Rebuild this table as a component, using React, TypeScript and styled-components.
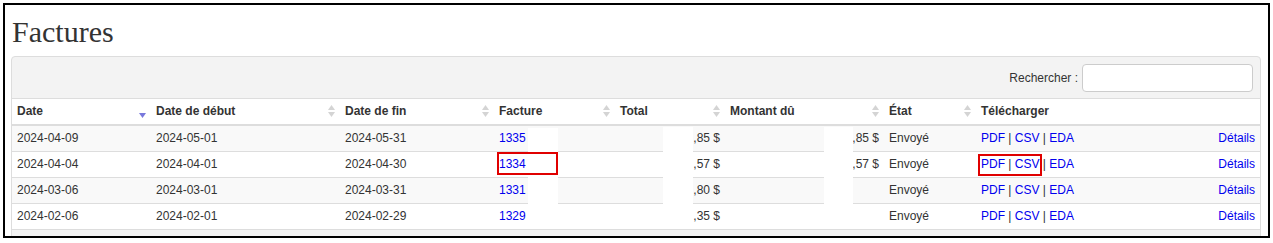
import React from 'react';
import styled, { createGlobalStyle } from 'styled-components';

const GlobalStyle = createGlobalStyle`
  body {
    margin: 0;
    background: #fff;
    font-family: "Liberation Sans", Arial, sans-serif;
  }
`;

const Frame = styled.div`
  box-sizing: border-box;
  margin: 3px;
  width: 1267px;
  height: 235px;
  border: 2px solid #000;
  overflow: hidden;
  padding: 0 6px;
  background: #fff;
`;

const Title = styled.h1`
  font-family: "Liberation Serif", "Times New Roman", serif;
  font-size: 30px;
  line-height: 34px;
  font-weight: normal;
  color: #333;
  margin: 10px 1px 7px;
`;

const Panel = styled.div`
  position: relative;
  box-sizing: border-box;
  width: 1250px;
  border: 1px solid #ddd;
  border-radius: 4px;
  background: #f3f3f3;
`;

const Toolbar = styled.div`
  height: 41px;
  display: flex;
  justify-content: flex-end;
  align-items: center;
  gap: 4px;
  padding-right: 7px;
  border-bottom: 1px solid #ddd;
  font-size: 12px;
  color: #333;
`;

const SearchInput = styled.input`
  box-sizing: border-box;
  width: 171px;
  height: 28px;
  margin: 0;
  border: 1px solid #ccc;
  border-radius: 4px;
  background: #fff;
`;

const Table = styled.table`
  width: 100%;
  table-layout: fixed;
  border-collapse: separate;
  border-spacing: 0;
  background: #fff;
  font-size: 12px;
  color: #333;
`;

const Th = styled.th`
  padding: 0 5px;
  border-bottom: 2px solid #ddd;
  text-align: left;
  font-weight: bold;
`;

const HeadInner = styled.div`
  height: 25px;
  line-height: 25px;
  display: flex;
  justify-content: space-between;
  align-items: center;
`;

const Row = styled.tr<{ $striped: boolean }>`
  background: ${(p) => (p.$striped ? '#f9f9f9' : '#fff')};
`;

const Td = styled.td<{ $align?: string }>`
  padding: 0 5px;
  line-height: 25px;
  border-bottom: 1px solid #ddd;
  text-align: ${(p) => p.$align || 'left'};
  white-space: nowrap;
`;

const Link = styled.a`
  color: #0000ee;
  text-decoration: none;
`;

const Footer = styled.div`
  height: 20px;
  background: #f3f3f3;
`;

const Mask = styled.div<{ $x: number; $y: number; $w: number; $h: number }>`
  position: absolute;
  left: ${(p) => p.$x}px;
  top: ${(p) => p.$y}px;
  width: ${(p) => p.$w}px;
  height: ${(p) => p.$h}px;
  background: #fff;
`;

const Highlight = styled(Mask)`
  box-sizing: border-box;
  background: transparent;
  border: 2px solid #e00000;
`;

function SortIcon({ dir }: { dir?: 'desc' }) {
  if (dir === 'desc') {
    return (
      <svg width="7" height="14" viewBox="0 0 7 14">
        <polygon points="0,8 7,8 3.5,13" fill="#7878dc" />
      </svg>
    );
  }
  return (
    <svg width="7" height="13" viewBox="0 0 7 13">
      <polygon points="3.5,0 7,5 0,5" fill="#d4d4d4" />
      <polygon points="0,7 7,7 3.5,12" fill="#d4d4d4" />
    </svg>
  );
}

const widths = [139, 189, 154, 121, 110, 159, 92, 236, 48];

const headers = [
  { label: 'Date', dir: 'desc' as const },
  { label: 'Date de début' },
  { label: 'Date de fin' },
  { label: 'Facture' },
  { label: 'Total' },
  { label: 'Montant dû' },
  { label: 'État' },
];

const rows = [
  { date: '2024-04-09', start: '2024-05-01', end: '2024-05-31', inv: '1335', total: ',85 $', due: ',85 $' },
  { date: '2024-04-04', start: '2024-04-01', end: '2024-04-30', inv: '1334', total: ',57 $', due: ',57 $' },
  { date: '2024-03-06', start: '2024-03-01', end: '2024-03-31', inv: '1331', total: ',80 $', due: '' },
  { date: '2024-02-06', start: '2024-02-01', end: '2024-02-29', inv: '1329', total: ',35 $', due: '' },
];

export default function App() {
  return (
    <>
      <GlobalStyle />
      <Frame>
        <Title>Factures</Title>
        <Panel>
          <Toolbar>
            <span>Rechercher :</span>
            <SearchInput type="text" />
          </Toolbar>
          <Table>
            <colgroup>
              {widths.map((w, i) => (
                <col key={i} style={{ width: w }} />
              ))}
            </colgroup>
            <thead>
              <tr>
                {headers.map((h) => (
                  <Th key={h.label}>
                    <HeadInner>
                      <span>{h.label}</span>
                      <SortIcon dir={h.dir} />
                    </HeadInner>
                  </Th>
                ))}
                <Th>
                  <HeadInner>Télécharger</HeadInner>
                </Th>
                <Th>
                  <HeadInner />
                </Th>
              </tr>
            </thead>
            <tbody>
              {rows.map((r, i) => (
                <Row key={r.inv} $striped={i % 2 === 0}>
                  <Td>{r.date}</Td>
                  <Td>{r.start}</Td>
                  <Td>{r.end}</Td>
                  <Td>
                    <Link href="#">{r.inv}</Link>
                  </Td>
                  <Td $align="right">{r.total}</Td>
                  <Td $align="right">{r.due}</Td>
                  <Td>Envoyé</Td>
                  <Td>
                    <Link href="#">PDF</Link> | <Link href="#">CSV</Link> | <Link href="#">EDA</Link>
                  </Td>
                  <Td $align="right">
                    <Link href="#">Détails</Link>
                  </Td>
                </Row>
              ))}
            </tbody>
          </Table>
          <Footer />
          <Mask $x={516} $y={71} $w={30} $h={101} />
          <Mask $x={651} $y={70} $w={30} $h={102} />
          <Mask $x={812} $y={70} $w={29} $h={102} />
          <Highlight $x={485} $y={95} $w={61} $h={23} />
          <Highlight $x={966} $y={97} $w={64} $h={22} />
        </Panel>
      </Frame>
    </>
  );
}
